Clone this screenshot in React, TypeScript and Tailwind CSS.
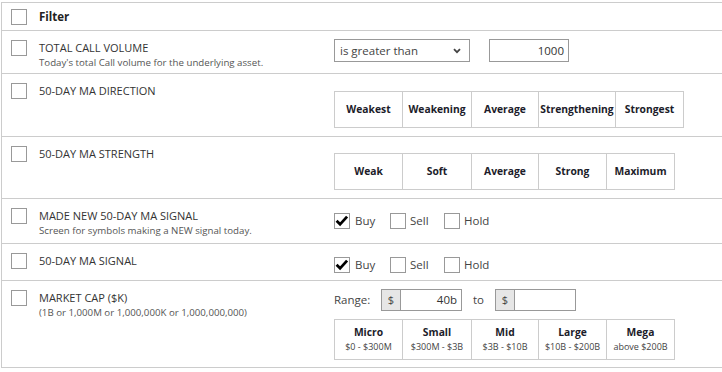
const font = { fontFamily: '"Open Sans", "Noto Sans", sans-serif' };

function Box({ checked = false }: { checked?: boolean }) {
  return (
    <span className="relative inline-block w-4 h-4 shrink-0 border border-[#999] bg-white">
      {checked && (
        <svg viewBox="0 0 16 16" className="absolute left-0 top-0 w-[14px] h-[14px]">
          <path d="M1.8 7.8 L5.8 11.8 L13.8 3" fill="none" stroke="#000" strokeWidth="3.2" />
        </svg>
      )}
    </span>
  );
}

function Label({ title, sub }: { title: string; sub?: string }) {
  return (
    <div className="flex flex-col">
      <span className="text-[11px] leading-[16px] text-[#333]">{title}</span>
      {sub && <span className="text-[9.7px] leading-[14px] text-[#555]">{sub}</span>}
    </div>
  );
}

function Segments({ items }: { items: { label: string; w: number; sub?: string }[] }) {
  return (
    <div className="flex border border-[#ccc]">
      {items.map((it, i) => (
        <div
          key={it.label}
          className={
            'flex flex-col items-center justify-center text-center ' +
            (i > 0 ? 'border-l border-[#ccc]' : '')
          }
          style={{ width: it.w }}
        >
          <span className="text-[10.3px] leading-[15px] font-bold text-[#1c1c2a]">{it.label}</span>
          {it.sub && <span className="text-[9px] leading-[14px] text-[#444]">{it.sub}</span>}
        </div>
      ))}
    </div>
  );
}

function Signals() {
  return (
    <div className="flex items-center text-[11.5px] text-[#444]">
      <Box checked />
      <span className="ml-[5px] w-[35px]">Buy</span>
      <Box />
      <span className="ml-[4px] w-[34px]">Sell</span>
      <Box />
      <span className="ml-[4px]">Hold</span>
    </div>
  );
}

function Row({ h, left, children, rightPad }: { h: string; left: React.ReactNode; children?: React.ReactNode; rightPad: string }) {
  return (
    <div className={'flex border-b border-[#ccc] ' + h}>
      <div className="flex items-start gap-[12px] w-[332px] pl-[9px] pt-[9px]">
        <Box />
        {left}
      </div>
      <div className={'flex flex-col ' + rightPad}>{children}</div>
    </div>
  );
}

export default function App() {
  return (
    <div className="w-[722px] h-[372px] bg-white pt-[2px] pl-px" style={font}>
      <div className="border-l border-t border-[#ccc]">
        <div className="flex items-center gap-[12px] h-[28px] pl-[9px] border-b border-[#ccc]">
          <Box />
          <span className="text-[11.5px] font-bold text-[#222]">Filter</span>
        </div>

        <Row h="h-[43px]" rightPad="pt-[8px]" left={<Label title="TOTAL CALL VOLUME" sub="Today's total Call volume for the underlying asset." />}>
          <div className="flex items-center">
            <div className="flex items-center justify-between w-[136px] h-[23px] border border-[#999] pl-[5px] pr-[8px] text-[11.5px] text-[#444]">
              <span>is greater than</span>
              <svg viewBox="0 0 10 8" className="w-[8px] h-[6px]">
                <path d="M1 1.5 L5 5.5 L9 1.5" fill="none" stroke="#444" strokeWidth="2.4" />
              </svg>
            </div>
            <div className="ml-[19px] flex items-center justify-end w-[80px] h-[23px] border border-[#999] pr-[4px] text-[11.5px] text-[#333]">
              1000
            </div>
          </div>
        </Row>

        <Row h="h-[63px]" rightPad="pt-[17px]" left={<Label title="50-DAY MA DIRECTION" />}>
          <div className="h-[37px] flex">
            <Segments
              items={[
                { label: 'Weakest', w: 67 },
                { label: 'Weakening', w: 69 },
                { label: 'Average', w: 67 },
                { label: 'Strengthening', w: 77 },
                { label: 'Strongest', w: 68 },
              ]}
            />
          </div>
        </Row>

        <Row h="h-[62px]" rightPad="pt-[16px]" left={<Label title="50-DAY MA STRENGTH" />}>
          <div className="h-[37px] flex">
            <Segments
              items={[
                { label: 'Weak', w: 67 },
                { label: 'Soft', w: 69 },
                { label: 'Average', w: 67 },
                { label: 'Strong', w: 68 },
                { label: 'Maximum', w: 68 },
              ]}
            />
          </div>
        </Row>

        <Row h="h-[45px]" rightPad="pt-[13px]" left={<Label title="MADE NEW 50-DAY MA SIGNAL" sub="Screen for symbols making a NEW signal today." />}>
          <Signals />
        </Row>

        <Row h="h-[37px]" rightPad="pt-[12px]" left={<Label title="50-DAY MA SIGNAL" />}>
          <Signals />
        </Row>

        <Row h="h-[87px]" rightPad="pt-[8px]" left={<Label title="MARKET CAP ($K)" sub="(1B or 1,000M or 1,000,000K or 1,000,000,000)" />}>
          <div className="flex items-center h-[22px] text-[11.5px] text-[#444]">
            <span className="w-[47px]">Range:</span>
            <div className="flex h-[22px] border border-[#999]">
              <span className="w-[19px] bg-[#e6e6e6] border-r border-[#999] flex items-center justify-center text-[11px]">$</span>
              <span className="w-[60px] flex items-center justify-end pr-[4px] text-[#333]">40b</span>
            </div>
            <span className="ml-[11px] w-[22px]">to</span>
            <div className="flex h-[22px] border border-[#999]">
              <span className="w-[19px] bg-[#e6e6e6] border-r border-[#999] flex items-center justify-center text-[11px]">$</span>
              <span className="w-[60px]"></span>
            </div>
          </div>
          <div className="h-[41px] flex mt-[8px]">
            <Segments
              items={[
                { label: 'Micro', w: 67, sub: '$0 - $300M' },
                { label: 'Small', w: 69, sub: '$300M - $3B' },
                { label: 'Mid', w: 67, sub: '$3B - $10B' },
                { label: 'Large', w: 68, sub: '$10B - $200B' },
                { label: 'Mega', w: 68, sub: 'above $200B' },
              ]}
            />
          </div>
        </Row>
      </div>
    </div>
  );
}
